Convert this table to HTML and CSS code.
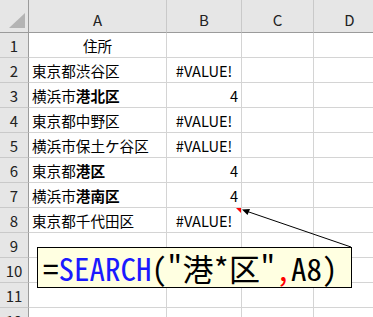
FILE: index.html
```html
<!DOCTYPE html>
<html lang="ja">
<head>
<meta charset="utf-8">
<link rel="stylesheet" href="styles.css">
</head>
<body>
<div class="sheet">
  <div class="grid">
    <div class="corner"><span class="tri"></span></div>
    <div class="ch">A</div><div class="ch">B</div><div class="ch">C</div><div class="ch">D</div>

    <div class="rh">1</div><div class="c center">住所</div><div class="c"></div><div class="c"></div><div class="c"></div>
    <div class="rh">2</div><div class="c">東京都渋谷区</div><div class="c center">#VALUE!</div><div class="c"></div><div class="c"></div>
    <div class="rh">3</div><div class="c">横浜市<b>港北区</b></div><div class="c right">4</div><div class="c"></div><div class="c"></div>
    <div class="rh">4</div><div class="c">東京都中野区</div><div class="c center">#VALUE!</div><div class="c"></div><div class="c"></div>
    <div class="rh">5</div><div class="c">横浜市保土ケ谷区</div><div class="c center">#VALUE!</div><div class="c"></div><div class="c"></div>
    <div class="rh">6</div><div class="c">東京都<b>港区</b></div><div class="c right">4</div><div class="c"></div><div class="c"></div>
    <div class="rh">7</div><div class="c">横浜市<b>港南区</b></div><div class="c right">4</div><div class="c"></div><div class="c"></div>
    <div class="rh">8</div><div class="c">東京都千代田区</div><div class="c center">#VALUE!</div><div class="c"></div><div class="c"></div>
    <div class="rh">9</div><div class="c"></div><div class="c"></div><div class="c"></div><div class="c"></div>
    <div class="rh">10</div><div class="c"></div><div class="c"></div><div class="c"></div><div class="c"></div>
    <div class="rh">11</div><div class="c"></div><div class="c"></div><div class="c"></div><div class="c"></div>
    <div class="rh">12</div><div class="c"></div><div class="c"></div><div class="c"></div><div class="c"></div>
  </div>

  <svg class="overlay" width="385" height="330" viewBox="0 0 385 330">
    <polygon points="236,208 241,208 241,213" fill="#ff0000"/>
    <line x1="351" y1="247" x2="246" y2="211" stroke="#000" stroke-width="1"/>
    <polygon points="242,209.5 250,209 247.5,215" fill="#000"/>
  </svg>

  <div class="callout"><span class="eq">=</span><span class="fn">SEARCH</span>("港*区"<span class="comma">,</span>A8)</div>
</div>
</body>
</html>
```
FILE: styles.css
```css
html, body {
  margin: 0;
  padding: 0;
  background: #ffffff;
  overflow: hidden;
}

.sheet {
  position: relative;
  width: 385px;
  height: 340px;
  font-family: "Noto Sans CJK JP", "Noto Sans", sans-serif;
  font-size: 14.6px;
  color: #000;
}

.grid {
  display: grid;
  grid-template-columns: 29px 138px 75px 72px 72px;
  grid-template-rows: 33px repeat(12, 25px);
}

.grid > div {
  box-sizing: border-box;
  display: flex;
  align-items: center;
  white-space: nowrap;
  overflow: hidden;
}

.corner {
  background: #e6e6e6;
  border-right: 1px solid #9b9b9b;
  border-bottom: 1px solid #9b9b9b;
  justify-content: flex-end;
  align-items: flex-end !important;
  padding: 0 3px 4px 0;
}

.tri {
  width: 0;
  height: 0;
  border-left: 16px solid transparent;
  border-bottom: 15px solid #b4b4b4;
}

.ch {
  background: #e6e6e6;
  border-right: 1px solid #c9c9c9;
  border-bottom: 1px solid #9b9b9b;
  justify-content: center;
  padding-top: 7px;
  color: #222;
  font-size: 15px;
}

.rh {
  background: #e6e6e6;
  border-right: 1px solid #9b9b9b;
  border-bottom: 1px solid #c9c9c9;
  justify-content: center;
  color: #222;
  font-size: 15px;
}

.c {
  border-right: 1px solid #d4d4d4;
  border-bottom: 1px solid #d4d4d4;
  padding: 0 3px 0 3px;
}

.c b {
  font-weight: 700;
}

.center {
  justify-content: center;
}

.right {
  justify-content: flex-end;
}

.overlay {
  position: absolute;
  left: 0;
  top: 0;
}

.callout {
  position: absolute;
  left: 37px;
  top: 247px;
  width: 315px;
  height: 41px;
  box-sizing: border-box;
  border: 1px solid #000;
  background: #ffffe1;
  padding-left: 5px;
  display: flex;
  align-items: center;
  font-family: "Noto Sans Mono CJK JP", "Noto Sans CJK JP", monospace;
  font-size: 31px;
  line-height: 1;
  color: #000;
  white-space: nowrap;
}

.fn {
  color: #1a1aff;
}

.comma {
  color: #ff0000;
}
```
